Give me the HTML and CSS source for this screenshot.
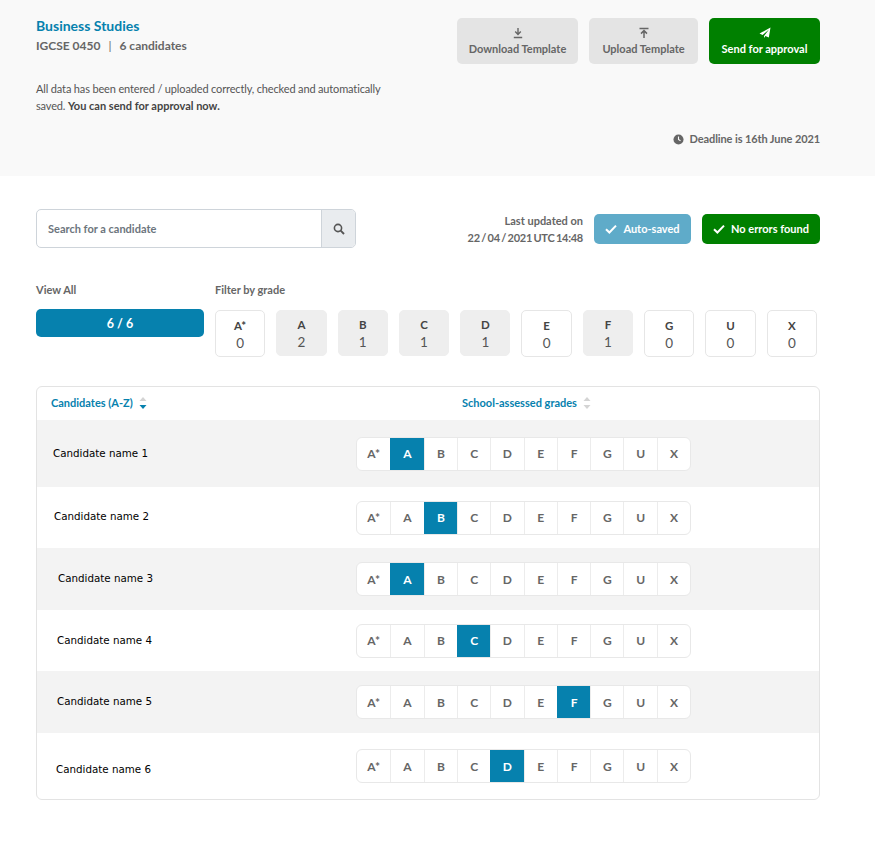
FILE: index.html
```html
<!DOCTYPE html>
<html lang="en">
<head>
<meta charset="utf-8">
<title>Business Studies</title>
<link rel="stylesheet" href="styles.css">
</head>
<body>
<header class="head">
  <div class="head-top">
    <div class="intro">
      <h1 class="subject">Business Studies</h1>
      <p class="meta">IGCSE 0450<span class="sep">|</span>6 candidates</p>
      <p class="note">All data has been entered / uploaded correctly, checked and automatically saved. <b>You can send for approval now.</b></p>
    </div>
    <div class="actions">
      <button class="act act-dl"><svg class="ico" viewBox="0 0 12 12"><path d="M6 1v6M3.2 4.6 6 7.4l2.8-2.8M1.8 10.5h8.4" fill="none" stroke="currentColor" stroke-width="1.4"/></svg>Download Template</button>
      <button class="act act-ul"><svg class="ico" viewBox="0 0 12 12"><path d="M1.5 1.5h9M6 11V4M3 6.6l3-3 3 3" fill="none" stroke="currentColor" stroke-width="1.5"/></svg>Upload Template</button>
      <button class="act act-send"><svg class="ico" viewBox="0 0 12 12"><path d="M11.5.5 9.8 10.4 6.4 9 5 11V9l5-6.4L3.6 8 .5 6.6z" fill="currentColor"/></svg>Send for approval</button>
    </div>
  </div>
  <p class="deadline"><svg class="clock" viewBox="0 0 12 12"><circle cx="6" cy="6" r="5.5" fill="currentColor"/><path d="M6 2.8V6l2.2 1.4" fill="none" stroke="#f9f9f9" stroke-width="1.2"/></svg>Deadline is 16th June 2021</p>
</header>
<main class="main">
  <section class="toolbar">
    <div class="search">
      <span class="search-text">Search for a candidate</span>
      <span class="search-btn"><svg viewBox="0 0 12 12" class="mag"><circle cx="5" cy="5" r="3.6" fill="none" stroke="currentColor" stroke-width="1.6"/><path d="m7.7 7.7 3.3 3.3" stroke="currentColor" stroke-width="1.9"/></svg></span>
    </div>
    <div class="status">
      <p class="updated">Last updated on<br><span class="stamp">22 / 04 / 2021 UTC 14:48</span></p>
      <span class="pill pill-blue"><svg class="chk" viewBox="0 0 12 10"><path d="m1 5.2 3.4 3.3L11 1.6" fill="none" stroke="currentColor" stroke-width="2"/></svg>Auto-saved</span>
      <span class="pill pill-green"><svg class="chk" viewBox="0 0 12 10"><path d="m1 5.2 3.4 3.3L11 1.6" fill="none" stroke="currentColor" stroke-width="2"/></svg>No errors found</span>
    </div>
  </section>
  <section class="filters">
    <div class="viewall">
      <div class="flabel flabel-all">View All</div>
      <button class="all">6 / 6</button>
    </div>
    <div class="bygrade">
      <div class="flabel">Filter by grade</div>
      <div class="tiles">
        <div class="tile"><b>A*</b><span>0</span></div>
        <div class="tile on"><b>A</b><span>2</span></div>
        <div class="tile on"><b>B</b><span>1</span></div>
        <div class="tile on"><b>C</b><span>1</span></div>
        <div class="tile on"><b>D</b><span>1</span></div>
        <div class="tile"><b>E</b><span>0</span></div>
        <div class="tile on"><b>F</b><span>1</span></div>
        <div class="tile"><b>G</b><span>0</span></div>
        <div class="tile"><b>U</b><span>0</span></div>
        <div class="tile"><b>X</b><span>0</span></div>
      </div>
    </div>
  </section>
  <section class="table">
    <div class="thead">
      <div class="th th-name">Candidates (A-Z)<svg class="sort" viewBox="0 0 8 14"><path d="M4 1 7.5 5h-7z" fill="#d4d4d4"/><path d="M4 13 .5 9h7z" fill="#0681ae"/></svg></div>
      <div class="th th-grades">School-assessed grades<svg class="sort" viewBox="0 0 8 14"><path d="M4 1 7.5 5h-7z" fill="#d4d4d4"/><path d="M4 13 .5 9h7z" fill="#d4d4d4"/></svg></div>
    </div>
    <div class="row row1 alt"><div class="name n1">Candidate name 1</div><div class="grades"><span>A*</span><span class="sel">A</span><span>B</span><span>C</span><span>D</span><span>E</span><span>F</span><span>G</span><span>U</span><span>X</span></div></div>
    <div class="row row2"><div class="name n2">Candidate name 2</div><div class="grades"><span>A*</span><span>A</span><span class="sel">B</span><span>C</span><span>D</span><span>E</span><span>F</span><span>G</span><span>U</span><span>X</span></div></div>
    <div class="row row3 alt"><div class="name n3">Candidate name 3</div><div class="grades"><span>A*</span><span class="sel">A</span><span>B</span><span>C</span><span>D</span><span>E</span><span>F</span><span>G</span><span>U</span><span>X</span></div></div>
    <div class="row row4"><div class="name n4">Candidate name 4</div><div class="grades"><span>A*</span><span>A</span><span>B</span><span class="sel">C</span><span>D</span><span>E</span><span>F</span><span>G</span><span>U</span><span>X</span></div></div>
    <div class="row row5 alt"><div class="name n4">Candidate name 5</div><div class="grades"><span>A*</span><span>A</span><span>B</span><span>C</span><span>D</span><span>E</span><span class="sel">F</span><span>G</span><span>U</span><span>X</span></div></div>
    <div class="row row6"><div class="name n6">Candidate name 6</div><div class="grades"><span>A*</span><span>A</span><span>B</span><span>C</span><span class="sel">D</span><span>E</span><span>F</span><span>G</span><span>U</span><span>X</span></div></div>
  </section>
</main>
</body>
</html>
```
FILE: styles.css
```css
* { box-sizing: border-box; }
html, body { margin: 0; padding: 0; }
body { font-family: "Lato", "Noto Sans", sans-serif; color: #666; background: #fff; }
p, h1 { margin: 0; }
button { font-family: inherit; border: 0; padding: 0; }

.head { background: #f9f9f9; height: 176px; padding: 17px 55px 0 36px; }
.head-top { display: flex; justify-content: space-between; }
.intro { width: 350px; }
.subject { font-size: 14px; line-height: 18px; font-weight: 700; color: #0681ae; }
.meta { font-size: 12px; line-height: 18px; font-weight: 700; color: #666; margin-top: 2px; }
.sep { font-weight: 400; margin: 0 8px; }
.note { font-size: 11px; letter-spacing: -0.15px; line-height: 17px; color: #555; margin-top: 25px; }
.note b { color: #444; letter-spacing: 0; }
.actions { display: flex; gap: 11px; margin-top: 1px; }
.act { height: 46px; border-radius: 5px; font-size: 11px; font-weight: 700; display: flex; flex-direction: column; align-items: center; justify-content: center; gap: 3px; background: #e4e4e4; color: #666; }
.act-dl { width: 121px; }
.act-ul { width: 109px; }
.act-send { width: 111px; background: #008000; color: #fff; }
.ico { width: 12px; height: 12px; }
.deadline { display: flex; justify-content: flex-end; align-items: center; gap: 6px; font-size: 11px; letter-spacing: -0.1px; font-weight: 700; line-height: 14px; color: #666; margin-top: 18px; }
.clock { width: 11px; height: 11px; }

.main { padding: 33px 55px 0 36px; }
.toolbar { display: flex; justify-content: space-between; align-items: center; height: 39px; }
.search { width: 320px; height: 39px; display: flex; border: 1px solid #ced4da; border-radius: 5px; overflow: hidden; }
.search-text { flex: 1; font-size: 11px; font-weight: 700; color: #6c757d; line-height: 37px; padding-left: 11px; }
.search-btn { width: 34px; background: #e9ecef; border-left: 1px solid #ced4da; display: flex; align-items: center; justify-content: center; color: #555; }
.mag { width: 12px; height: 12px; }
.status { display: flex; align-items: center; }
.updated { font-size: 11px; line-height: 17px; font-weight: 700; color: #666; text-align: right; margin-right: 11px; }
.stamp { word-spacing: -1px; letter-spacing: -0.25px; }
.pill { height: 30px; border-radius: 5px; color: #fff; font-size: 11px; font-weight: 700; display: flex; align-items: center; justify-content: center; gap: 6px; }
.pill-blue { width: 97px; background: #5fabc9; }
.pill-green { width: 118px; margin-left: 11px; background: #008000; }
.chk { width: 12px; height: 10px; }

.filters { display: flex; gap: 11px; margin-top: 35px; }
.viewall { width: 168px; }
.flabel { font-size: 11px; line-height: 14px; font-weight: 700; color: #666; margin-bottom: 13px; }
.flabel-all { margin-bottom: 12px; }
.all { width: 168px; height: 28px; border-radius: 5px; background: #0681ae; color: #fff; font-size: 12.5px; font-weight: 700; display: block; }
.tiles { display: grid; grid-template-columns: repeat(10, 50.3px); column-gap: 11px; }
.tile { height: 47px; border: 1px solid #e6e6e6; border-radius: 5px; display: flex; flex-direction: column; align-items: center; padding-top: 7px; font-size: 12px; line-height: 16px; background: #fff; }
.tile b { color: #444; font-size: 11.5px; }
.tile span { font-size: 13.5px; line-height: 19px; color: #555; }
.tile.on { background: #eee; border-color: #eee; padding-top: 6px; height: 46px; }

.table { margin-top: 29px; width: 784px; border: 1px solid #e3e3e3; border-radius: 6px; overflow: hidden; }
.thead { height: 33px; padding-bottom: 2px; display: flex; align-items: center; }
.th { font-size: 11px; font-weight: 700; color: #0681ae; display: flex; align-items: center; gap: 6px; }
.th-name { padding-left: 14px; width: 425px; }
.sort { width: 8px; height: 14px; }
.row { display: flex; align-items: center; padding-bottom: 2px; }
.alt { background: #f3f3f3; }
.row1 { height: 67px; }
.row2 { height: 61px; }
.row3 { height: 62px; }
.row4 { height: 61px; }
.row5 { height: 62px; }
.row6 { height: 66px; }
.name { width: 319px; font-family: "DejaVu Sans", sans-serif; font-size: 10.3px; color: #000; }
.n1 { padding-left: 16px; }
.n2 { padding-left: 17px; padding-bottom: 2px; }
.n3 { padding-left: 21px; }
.n4 { padding-left: 20px; }
.n6 { padding-left: 19px; padding-top: 8px; }
.grades { display: flex; width: 335px; height: 34px; margin-top: 2px; border: 1px solid #e8e8e8; border-radius: 6px; overflow: hidden; background: #fff; }
.grades span { flex: 1 1 0; display: flex; align-items: center; justify-content: center; font-size: 12px; font-weight: 700; color: #666; border-left: 1px solid #ececec; }
.grades span:first-child { flex: 0 0 33.4px; border-left: 0; }
.grades .sel { background: #0681ae; color: #fff; border-left-color: #0681ae; }
```
